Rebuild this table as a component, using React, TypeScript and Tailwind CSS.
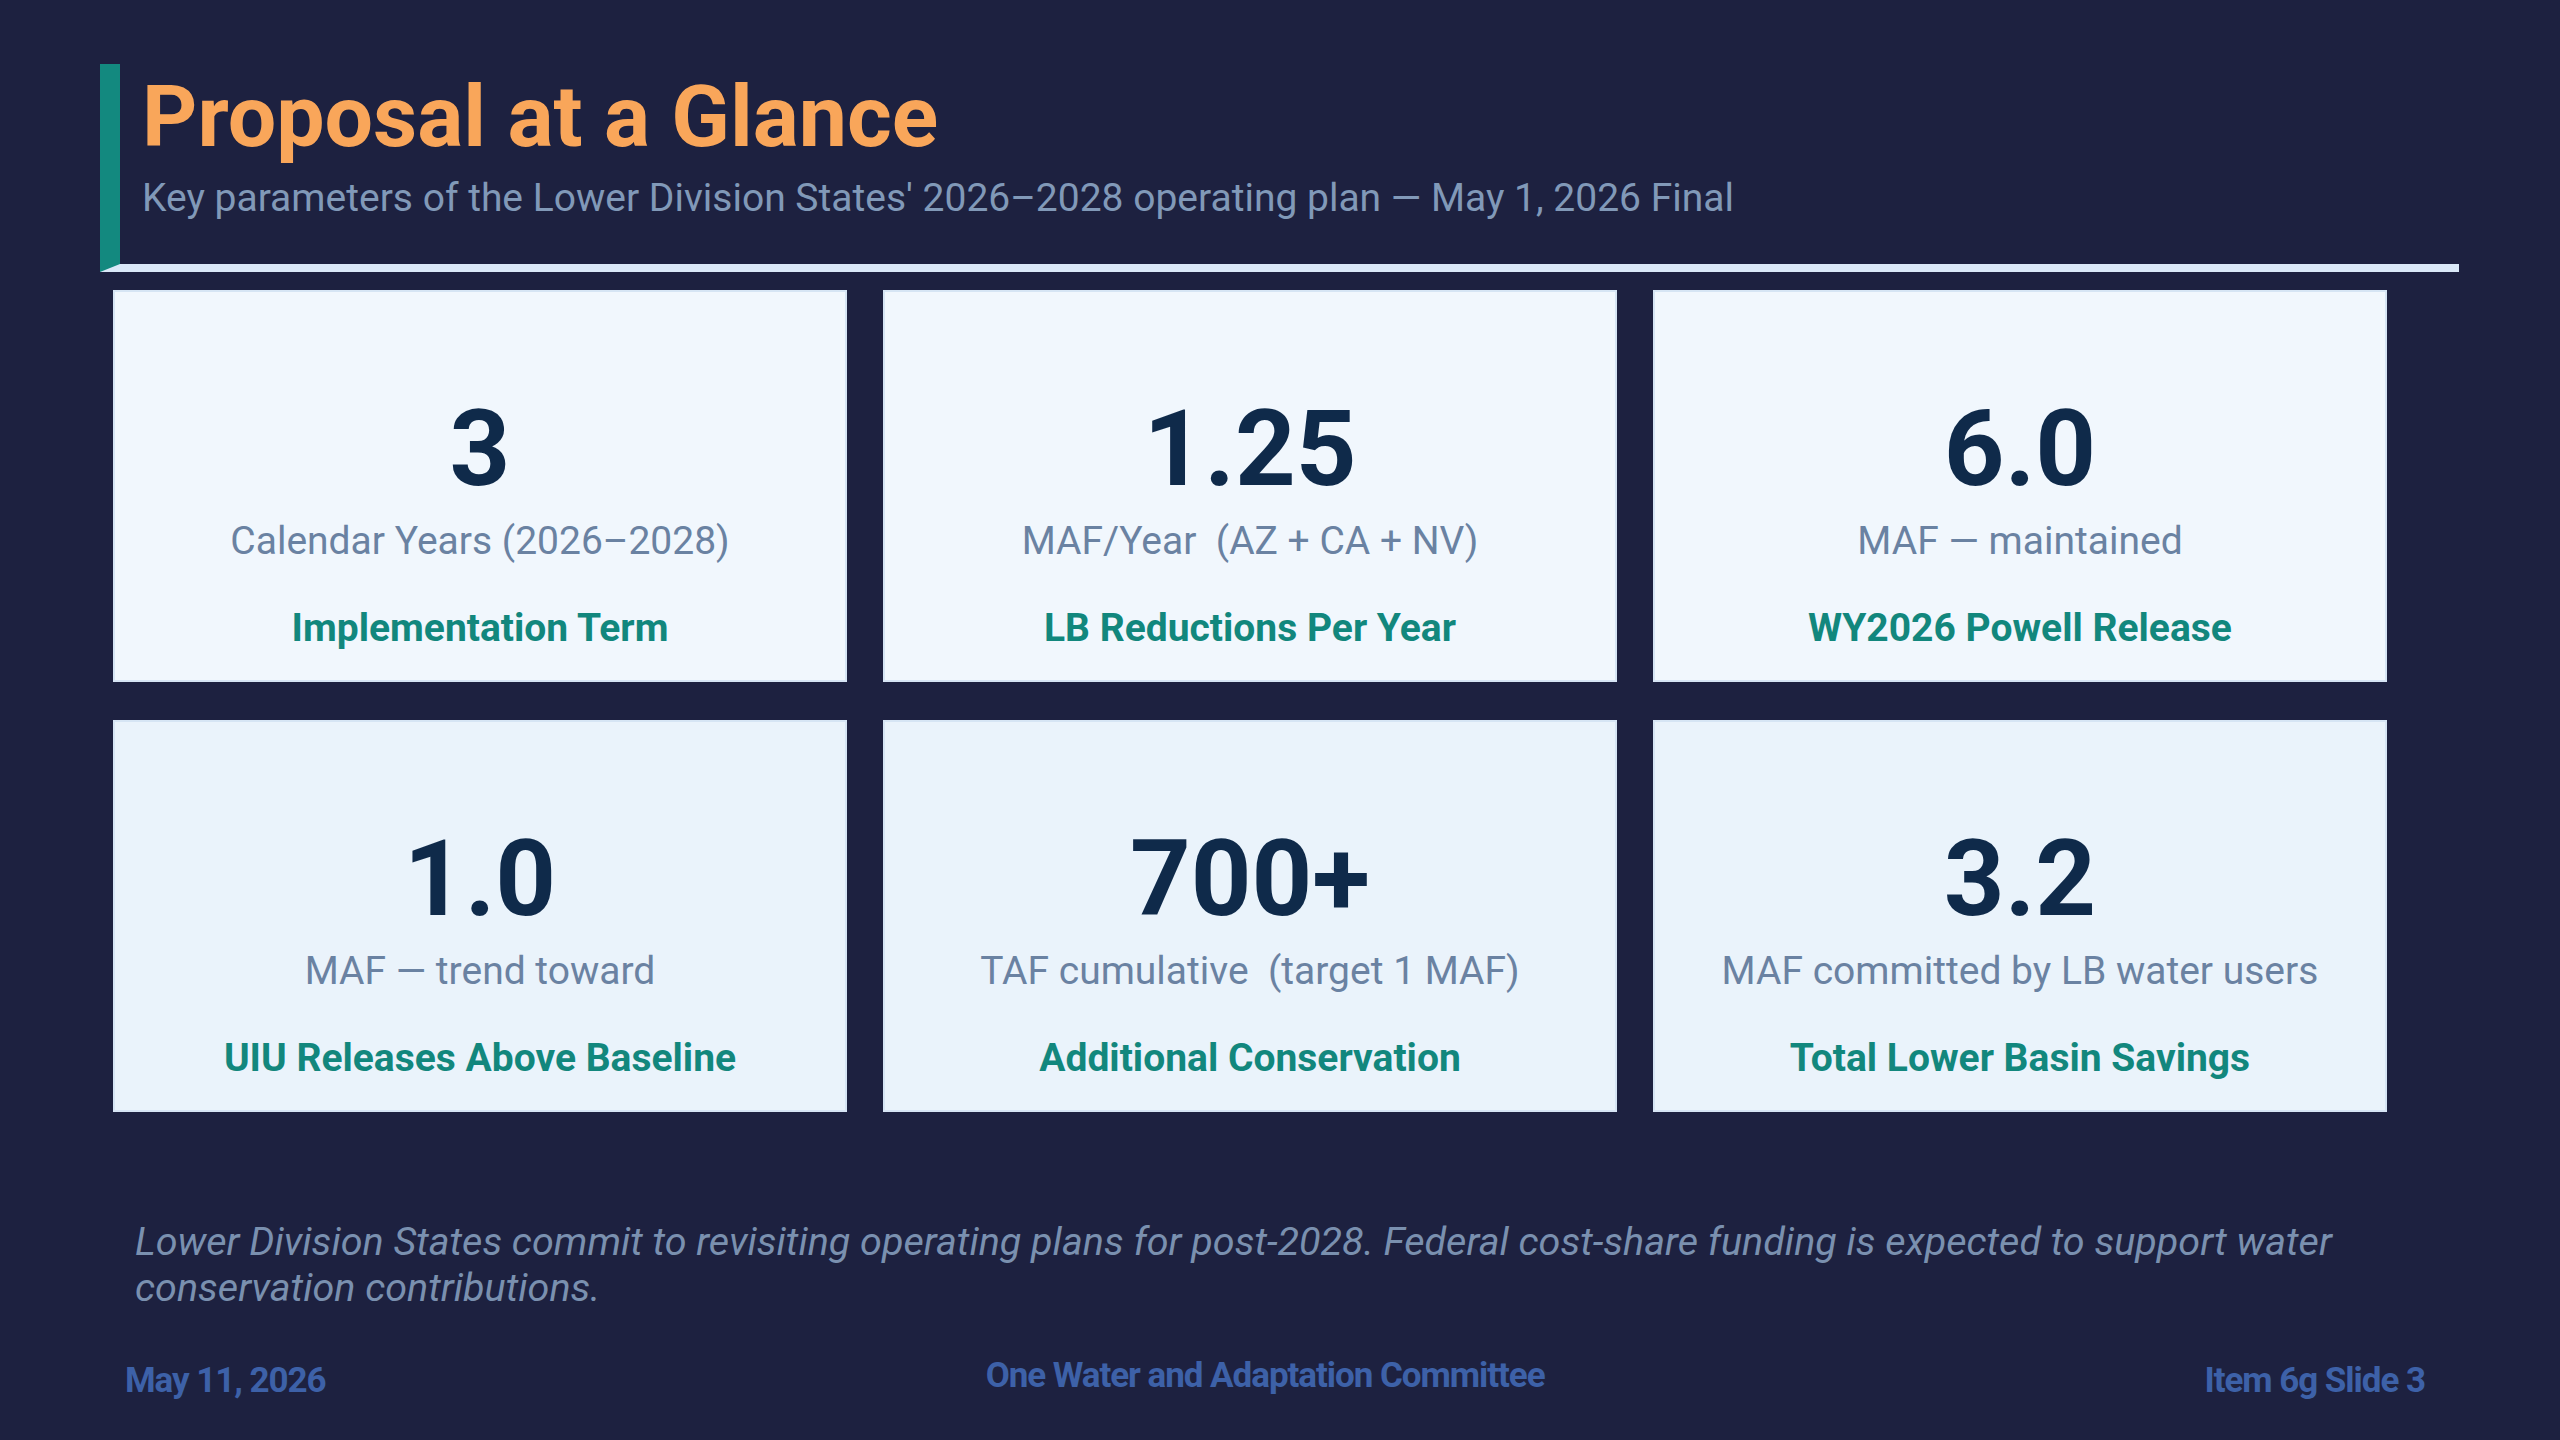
const cards = [
  { value: "3", sub: "Calendar Years (2026–2028)", label: "Implementation Term" },
  { value: "1.25", sub: "MAF/Year\u00a0\u00a0(AZ + CA + NV)", label: "LB Reductions Per Year" },
  { value: "6.0", sub: "MAF — maintained", label: "WY2026 Powell Release" },
  { value: "1.0", sub: "MAF — trend toward", label: "UIU Releases Above Baseline" },
  { value: "700+", sub: "TAF cumulative\u00a0\u00a0(target 1 MAF)", label: "Additional Conservation" },
  { value: "3.2", sub: "MAF committed by LB water users", label: "Total Lower Basin Savings" },
];

function StatCard({ value, sub, label, row }: { value: string; sub: string; label: string; row: number }) {
  return (
    <div
      className={
        "h-[392px] border-2 border-[#d6e5f4] flex flex-col items-center pt-[104px] " +
        (row === 0 ? "bg-[#f1f7fd]" : "bg-[#eaf3fb]")
      }
    >
      <div className="text-[106px] leading-none font-bold text-[#0f2a4a]">{value}</div>
      <div className="mt-[20px] text-[39px] leading-none text-[#6a82a2] whitespace-pre">{sub}</div>
      <div className="mt-[48px] text-[39px] leading-none font-bold text-[#12877d]">{label}</div>
    </div>
  );
}

export default function App() {
  return (
    <div
      className="w-[2560px] h-[1440px] bg-[#1d2140] flex flex-col overflow-hidden"
      style={{ fontFamily: "Roboto, 'Liberation Sans', sans-serif" }}
    >
      {/* Header */}
      <div className="mt-[64px] ml-[100px] w-[2359px] border-l-[20px] border-l-[#13897f] border-b-[8px] border-b-[#dae8f8] pl-[22px] pt-[10px] pb-[46px]">
        <h1 className="text-[86px] leading-none font-bold text-[#f9a65a]">Proposal at a Glance</h1>
        <p className="mt-[19px] text-[39px] leading-none text-[#8199b8]">
          Key parameters of the Lower Division States' 2026–2028 operating plan — May 1, 2026 Final
        </p>
      </div>

      {/* Stat cards */}
      <div className="mt-[18px] ml-[113px] grid grid-cols-[734px_734px_734px] gap-x-[36px] gap-y-[38px]">
        {cards.map((c, i) => (
          <StatCard key={c.label} {...c} row={i < 3 ? 0 : 1} />
        ))}
      </div>

      {/* Footnote */}
      <p className="mt-[107px] ml-[135px] w-[2290px] text-[39.5px] leading-[46px] italic text-[#7a90af]">
        Lower Division States commit to revisiting operating plans for post-2028. Federal cost-share funding is
        expected to support water conservation contributions.
      </p>

      {/* Footer */}
      <div className="mt-[52px] pl-[125px] pr-[135px] flex justify-between items-start text-[35px] leading-none font-bold tracking-[-0.03em] text-[#3d61a8]">
        <span>May 11, 2026</span>
        <span className="-mt-[5px]">One Water and Adaptation Committee</span>
        <span>Item 6g Slide 3</span>
      </div>
    </div>
  );
}
